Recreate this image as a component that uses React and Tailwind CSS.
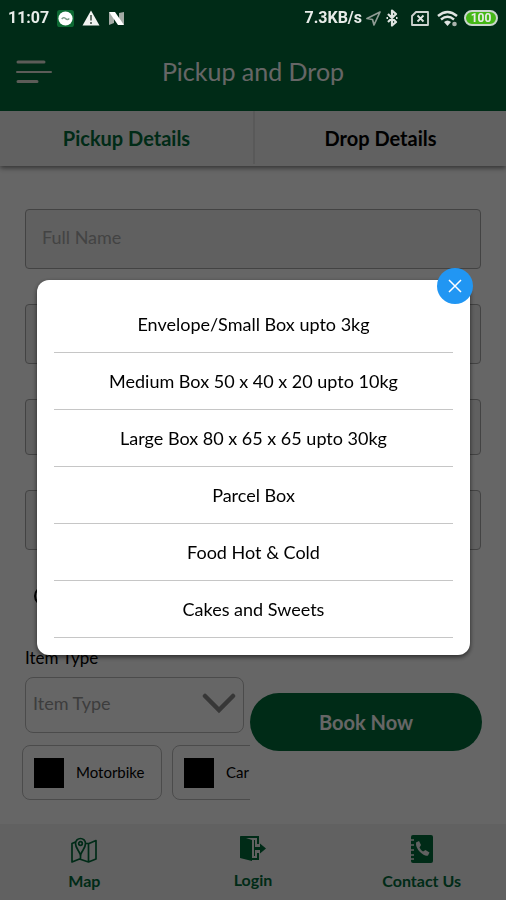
import React, { useState } from 'react'

const itemTypes = [
    'Envelope/Small Box upto 3kg',
    'Medium Box 50 x 40 x 20 upto 10kg',
    'Large Box 80 x 65 x 65 upto 30kg',
    'Parcel Box',
    'Food Hot & Cold',
    'Cakes and Sweets',
]

function StatusBar() {
    return (
        <div className="fixed inset-x-0 top-0 z-20 flex h-9 items-center justify-between px-2 font-[Roboto,sans-serif] text-base font-bold text-[#e8ece9]">
            <div className="flex items-center gap-2">
                <span>11:07</span>
                <svg width="17" height="17" viewBox="0 0 18 18">
                    <rect width="18" height="18" rx="3" fill="#0d6a33" />
                    <circle cx="9" cy="9" r="7.500" fill="#fff" />
                    <path d="M5 9.500q2-2.500 4-.5t4 0" fill="none" stroke="#7b9c86" strokeWidth="1.500" />
                </svg>
                <svg width="18" height="16" viewBox="0 0 18 16">
                    <path d="M9 .5 17.5 15.5H.5Z" fill="#f1f3f1" />
                    <path d="M9 5v5.5M9 12v2" stroke="#56655c" strokeWidth="1.800" />
                </svg>
                <svg width="17" height="15" viewBox="0 0 17 15">
                    <path d="M1 1v13l5-2V6zM16 14V1l-5 1v8z" fill="#a3aaa5" />
                    <path d="M1 1h6l9 13h-6z" fill="#fff" />
                </svg>
            </div>
            <div className="flex items-center">
                <span>7.3KB/s</span>
                <svg className="ml-1" width="15" height="15" viewBox="0 0 15 15">
                    <path d="M14 1 1 7.500l5.500 1 1.500 5.500z" fill="none" stroke="#8f9b94" strokeWidth="1.700" strokeLinejoin="round" />
                </svg>
                <svg className="ml-1" width="14" height="18" viewBox="0 0 14 18">
                    <path d="m3 5 8 8-4 3.500v-15L11 5l-8 8" fill="none" stroke="#dfe4e1" strokeWidth="2.200" strokeLinejoin="round" />
                    <path d="M1.500 9h1.500M11 9h1.500" stroke="#dfe4e1" strokeWidth="2" />
                </svg>
                <svg className="ml-3" width="18" height="15" viewBox="0 0 18 15">
                    <path d="M5 1h12v13H1V5z" fill="none" stroke="#cfd5d1" strokeWidth="1.800" strokeLinejoin="round" />
                    <path d="m6.500 4.500 6 6M12.500 4.500l-6 6" stroke="#dfe4e1" strokeWidth="1.800" />
                </svg>
                <svg className="ml-2" width="21" height="17" viewBox="0 0 21 17">
                    <path d="M1 6q9.500-8 19 0M4 9.500q6.500-5.500 13 0" fill="none" stroke="#dfe4e1" strokeWidth="2.400" />
                    <path d="M7 12q3.500-3 7 0l-3.500 4z" fill="#dfe4e1" />
                    <circle cx="17.500" cy="14" r="2.300" fill="#aab3ad" />
                </svg>
                <span className="ml-1.5 flex h-4 w-[34px] items-center justify-center rounded-full border-2 border-[#c9d6cd] bg-[#45b817] text-xs leading-none">
                    100
                </span>
            </div>
        </div>
    )
}

function MapIcon() {
    return (
        <svg width="26" height="26" viewBox="0 0 26 26" fill="none" stroke="#006b3a" strokeWidth="1.700" strokeLinejoin="round">
            <path d="M4.500 5 1 6.500V25l7.500-3 9 3 7.500-3V3.500l-7 3h-3M9.500 22v-4M17.500 25V7" />
            <path d="M9.500 18C8 13.500 4.500 11 4.500 6.500a5 5 0 0 1 10 0C14.500 11 11 13.500 9.500 18Z" />
            <circle cx="9.500" cy="6.500" r="1.800" />
        </svg>
    )
}

function LoginIcon() {
    return (
        <svg width="27" height="27" viewBox="0 0 27 27">
            <path d="M1 1 13 5v21L1 23z" fill="#006b3a" />
            <path d="M2 2h17v7M19 18v6h-6" fill="none" stroke="#006b3a" strokeWidth="2" />
            <path d="M15.500 5v16" stroke="#006b3a" strokeWidth="1" />
            <path d="M16 12h5V8.500l6 5-6 5V15h-5z" fill="#006b3a" />
        </svg>
    )
}

function ContactIcon() {
    return (
        <svg width="23" height="28" viewBox="0 0 23 28">
            <rect x="1" width="22" height="28" rx="2" fill="#006b3a" />
            <path d="M0 5h4M0 10h4M0 15h4M0 20h4M0 24h4" stroke="#f2f2f2" strokeWidth="1.300" />
            <path d="M6 7.500 9 6l2 4-1.500 2.500q1 2.500 3.500 4l2.500-1.500 4 2.500-1.500 3q-3.500 1-8-3.500T6 7.500Z" fill="#f2f2f2" />
        </svg>
    )
}

export default function App() {
    const [open, setOpen] = useState(true)
    const [itemType, setItemType] = useState('')

    const handleSelect = (type) => {
        setItemType(type)
        setOpen(false)
    }

    return (
        <div className="flex min-h-screen flex-col bg-white font-[Lato,sans-serif] text-black">
            <StatusBar />

            <header className="relative flex h-[111px] items-center justify-center bg-[#006b3a] pt-8">
                <button type="button" aria-label="Menu" className="absolute left-4">
                    <svg width="36" height="24" viewBox="0 0 36 24" stroke="#e6e6dc" strokeLinecap="round">
                        <path d="M2 2h26M2 21.500h19" strokeWidth="3" />
                        <path d="M1 12h34" strokeWidth="2" />
                    </svg>
                </button>
                <h1 className="text-[25px] text-white">Pickup and Drop</h1>
            </header>

            <div className="grid h-[55px] grid-cols-2 bg-[#f2f2f2] pb-0.5 text-xl font-bold shadow-[0_2px_5px_rgba(0,0,0,0.5)]">
                <button type="button" className="text-[#006b3a]">Pickup Details</button>
                <button type="button" className="border-l-2 border-[#dedede]">Drop Details</button>
            </div>

            <form className="flex flex-col" onSubmit={(e) => e.preventDefault()}>
                <div className="flex flex-col gap-[35px] px-[25px] pt-[43px]">
                    <input
                        type="text"
                        placeholder="Full Name"
                        aria-label="Full Name"
                        className="h-[60px] w-full rounded-sm border border-[#a8a8a8] bg-[#f0f0f0] px-4 pb-1 text-lg placeholder:text-[#a8a8a8]"
                    />
                    <input type="tel" aria-label="Phone" className="h-[60px] w-full rounded-sm border border-[#a8a8a8] bg-[#f0f0f0] px-4" />
                    <input type="email" aria-label="Email" className="h-14 w-full rounded-sm border border-[#a8a8a8] bg-[#f0f0f0] px-4" />
                    <input type="text" aria-label="Address" className="h-[60px] w-full rounded-sm border border-[#a8a8a8] bg-[#f0f0f0] px-4" />
                </div>
                <input
                    type="radio"
                    aria-label="Pickup now"
                    className="ml-[34px] mt-9 size-5 appearance-none rounded-full border-2 border-black"
                />
                <div className="mt-[42px] grid grid-cols-2 pl-[22px] pr-6">
                    <div className="min-w-0">
                        <label htmlFor="itemType" className="ml-[3px] block h-[29px] text-[17px] leading-5">Item Type</label>
                        <div className="relative ml-[3px] mr-2">
                            <select
                                id="itemType"
                                value={itemType}
                                onChange={(e) => setItemType(e.target.value)}
                                className="h-14 w-full appearance-none rounded-lg border border-[#bcbcbc] px-[7px] pb-1 text-lg text-[#999]"
                            >
                                <option value="">Item Type</option>
                                {itemTypes.map((type) => (
                                    <option key={type}>{type}</option>
                                ))}
                            </select>
                            <svg className="pointer-events-none absolute right-2 top-4" width="34" height="21" viewBox="0 0 34 21">
                                <path d="m3 3 14 14L31 3" fill="none" stroke="#8a8a8a" strokeWidth="4.500" strokeLinecap="round" />
                            </svg>
                        </div>
                        <div className="mr-0.5 mt-3 flex gap-2.5 overflow-hidden text-[15px]">
                            <label className="flex h-[55px] w-[140px] shrink-0 items-center gap-3 rounded-lg border border-[#bcbcbc] pl-[11px]">
                                <input type="checkbox" className="size-[30px] appearance-none bg-black" />
                                Motorbike
                            </label>
                            <label className="flex h-[55px] w-[140px] shrink-0 items-center gap-3 rounded-lg border border-[#bcbcbc] pl-[11px]">
                                <input type="checkbox" className="size-[30px] appearance-none bg-black" />
                                Car
                            </label>
                        </div>
                    </div>
                    <button type="submit" className="-ml-0.5 mt-[45px] h-[58px] rounded-full bg-[#006b3a] text-xl font-bold text-white">
                        Book Now
                    </button>
                </div>
            </form>

            <nav className="mt-auto grid h-[76px] grid-cols-3 bg-[#f2f2f2] text-base font-bold text-[#006b3a]">
                <a href="#map" className="flex flex-col items-center justify-end gap-1.5 pb-[7px]"><MapIcon />Map</a>
                <a href="#login" className="flex flex-col items-center justify-end gap-1.5 pb-2"><LoginIcon />Login</a>
                <a href="#contact" className="flex flex-col items-center justify-end gap-1.5 pb-[7px]"><ContactIcon />Contact Us</a>
            </nav>

            {open && (
                <div className="fixed inset-0 z-10 flex items-center justify-center bg-black/60 pb-px pl-[37px] pr-9 pt-9">
                    <div role="dialog" aria-label="Item Type" className="relative w-full rounded-xl bg-white px-[17px] pb-[17px] pt-4 shadow-[0_2px_5px_rgba(0,0,0,0.6)]">
                        <ul>
                            {itemTypes.map((type) => (
                                <li key={type} className="border-b border-[#c6c6c6]">
                                    <button type="button" onClick={() => handleSelect(type)} className="h-14 w-full text-lg">
                                        {type}
                                    </button>
                                </li>
                            ))}
                        </ul>
                        <button
                            type="button"
                            aria-label="Close"
                            onClick={() => setOpen(false)}
                            className="absolute -right-[3px] -top-3 flex size-9 items-center justify-center rounded-full bg-[#2196f3]"
                        >
                            <svg width="14" height="14" viewBox="0 0 14 14">
                                <path d="m1 1 12 12M13 1 1 13" stroke="#fff" strokeWidth="1.500" />
                            </svg>
                        </button>
                    </div>
                </div>
            )}
        </div>
    )
}
